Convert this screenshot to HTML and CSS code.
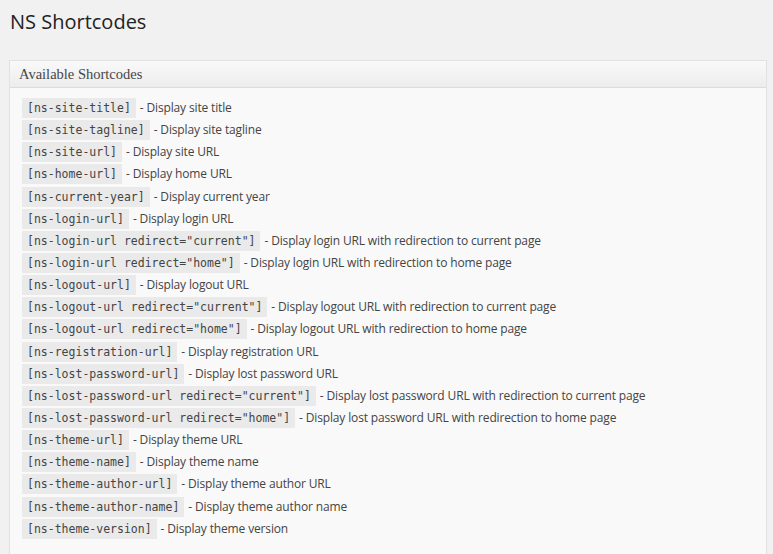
FILE: index.html
```html
<!DOCTYPE html>
<html>
<head>
<meta charset="utf-8">
<link rel="stylesheet" href="styles.css">
</head>
<body>
<div class="wrap">
  <h1 class="title">NS Shortcodes</h1>
  <div class="postbox">
    <h3 class="hndle">Available Shortcodes</h3>
    <div class="inside">
      <div class="row"><code>[ns-site-title]</code> - Display site title</div>
      <div class="row"><code>[ns-site-tagline]</code> - Display site tagline</div>
      <div class="row"><code>[ns-site-url]</code> - Display site URL</div>
      <div class="row"><code>[ns-home-url]</code> - Display home URL</div>
      <div class="row"><code>[ns-current-year]</code> - Display current year</div>
      <div class="row"><code>[ns-login-url]</code> - Display login URL</div>
      <div class="row"><code>[ns-login-url redirect="current"]</code> - Display login URL with redirection to current page</div>
      <div class="row"><code>[ns-login-url redirect="home"]</code> - Display login URL with redirection to home page</div>
      <div class="row"><code>[ns-logout-url]</code> - Display logout URL</div>
      <div class="row"><code>[ns-logout-url redirect="current"]</code> - Display logout URL with redirection to current page</div>
      <div class="row"><code>[ns-logout-url redirect="home"]</code> - Display logout URL with redirection to home page</div>
      <div class="row"><code>[ns-registration-url]</code> - Display registration URL</div>
      <div class="row"><code>[ns-lost-password-url]</code> - Display lost password URL</div>
      <div class="row"><code>[ns-lost-password-url redirect="current"]</code> - Display lost password URL with redirection to current page</div>
      <div class="row"><code>[ns-lost-password-url redirect="home"]</code> - Display lost password URL with redirection to home page</div>
      <div class="row"><code>[ns-theme-url]</code> - Display theme URL</div>
      <div class="row"><code>[ns-theme-name]</code> - Display theme name</div>
      <div class="row"><code>[ns-theme-author-url]</code> - Display theme author URL</div>
      <div class="row"><code>[ns-theme-author-name]</code> - Display theme author name</div>
      <div class="row"><code>[ns-theme-version]</code> - Display theme version</div>
    </div>
  </div>
</div>
</body>
</html>
```

FILE: styles.css
```css
html, body {
  margin: 0;
  padding: 0;
  background: #f1f1f1;
}
body {
  font-family: "Open Sans", sans-serif;
  font-size: 13px;
  color: #444;
  overflow: hidden;
}
.wrap {
  padding: 0 6px 0 9px;
}
.title {
  margin: 0;
  padding: 8px 0 0 1px;
  font-family: "Open Sans", sans-serif;
  font-size: 20px;
  line-height: 27px;
  font-weight: 400;
  color: #222;
}
.postbox {
  margin-top: 25px;
  border: 1px solid #e2e2e2;
  background: #f9f9f9;
  box-shadow: 0 1px 1px rgba(0,0,0,0.03);
}
.hndle {
  margin: 0;
  height: 26px;
  padding: 0 9px;
  font-family: "Liberation Serif", serif;
  font-size: 14.5px;
  font-weight: 400;
  line-height: 27px;
  color: #464646;
  background: linear-gradient(to bottom, #f9f9f9, #ececec);
  border-bottom: 1px solid #dcdcdc;
}
.inside {
  padding: 10px 12px 30px 12px;
}
.row {
  height: 20px;
  line-height: 20px;
  margin-bottom: 2.15px;
  white-space: nowrap;
  font-size: 12px;
  letter-spacing: -0.15px;
  color: #444;
}
code {
  display: inline-block;
  height: 20px;
  line-height: 20px;
  padding: 0 5px;
  margin-right: 1px;
  vertical-align: top;
  font-family: "DejaVu Sans Mono", monospace;
  font-size: 11.5px;
  letter-spacing: 0;
  color: #444;
  background: #eaeaea;
}
```
